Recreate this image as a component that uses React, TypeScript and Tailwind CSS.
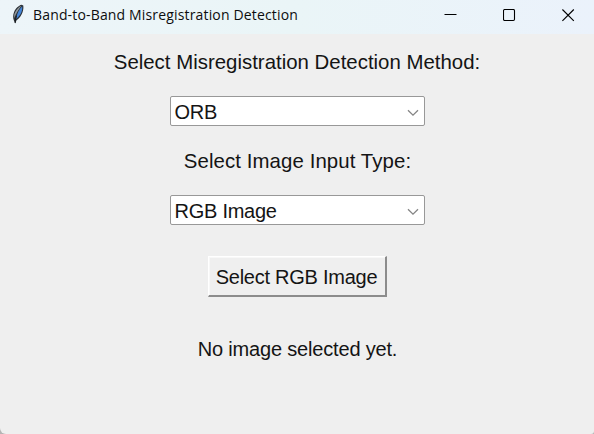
import React from "react";

function FeatherIcon() {
  return (
    <svg className="ml-[11px] shrink-0" width="14" height="22" viewBox="0 0 14 22">
      <path d="M10.5 .8 C7.8 1.4 4.5 4.5 3 8.2 C1.9 11 1.9 14 2.8 16.2 L4.1 19.6 L5.6 16.2 C9 14 13.2 8 12.3 1.4 Z" fill="#2b3036" />
      <path d="M10.4 1.8 C7.6 2.8 4.5 6.5 3.2 10.8 L3.2 14.2 C5 9.5 7.8 5.2 10.4 1.8 Z" fill="#92999d" />
      <path d="M11.2 2.2 C8.2 5.4 5.8 9.6 4.9 14.9 C8.6 12.4 11.9 7.9 11.2 2.2 Z" fill="#4384d6" />
      <path d="M5.6 11.5 C4.8 14 4.3 16.5 4.2 19" fill="none" stroke="#15181c" strokeWidth="0.9" />
    </svg>
  );
}

function TitleBar() {
  return (
    <header className="flex h-[34px] items-start bg-linear-to-r from-[#edf5f9] via-[#eaf5f7] to-[#ebf2fb]">
      <div className="flex h-[30px] flex-1 items-center">
        <FeatherIcon />
        <span className="ml-2 whitespace-pre font-['Open_Sans','Noto_Sans',sans-serif] text-[14px] leading-[30px] tracking-[0.16px] text-[#0c0d0e]">
          Band-to-Band Misregistration Detection
        </span>
      </div>
      <div className="flex h-[30px] items-center gap-[46px] pr-[19px] text-black">
        <svg width="13" height="13" viewBox="0 0 13 13">
          <path d="M.5 5.5h12" stroke="currentColor" />
        </svg>
        <svg width="13" height="13" viewBox="0 0 13 13">
          <rect x=".5" y=".5" width="11" height="11" rx="1.2" fill="none" stroke="currentColor" strokeWidth="1.1" />
        </svg>
        <svg width="13" height="13" viewBox="0 0 13 13">
          <path d="M.4.5l11.4 11.4M11.8.5L.4 11.9" stroke="currentColor" strokeWidth="1.15" />
        </svg>
      </div>
    </header>
  );
}

function Combobox({ value }: { value: string }) {
  return (
    <div className="flex h-[30px] w-[255px] items-center justify-between rounded-[2px] border border-[#989898] bg-white pr-[5px] pl-[4px]">
      <span className="pt-[2px] whitespace-pre tracking-[-0.25px]">{value}</span>
      <svg width="12" height="8" viewBox="0 0 12 8" className="mt-[3px]">
        <path d="M1 1.2l5 4.9 5-4.9" fill="none" stroke="#858585" strokeWidth="1.3" />
      </svg>
    </div>
  );
}

export default function App() {
  return (
    <div className="bg-[#b4b4b4]">
      <div className="flex h-[434px] w-[594px] flex-col overflow-hidden rounded-br-[3px] rounded-bl-[6px] bg-[#efefef]">
        <TitleBar />
        <main className="flex flex-1 flex-col items-center font-['Liberation_Sans',Arial,sans-serif] text-[20px] leading-[24px] text-[#141414]">
          <p className="mt-4 whitespace-pre text-[20.4px] tracking-[0.01px]">Select Misregistration Detection Method:</p>
          <div className="mt-[22px]">
            <Combobox value="ORB" />
          </div>
          <p className="mt-[23px] ml-px whitespace-pre text-[20.4px] tracking-[0.09px]">Select Image Input Type:</p>
          <div className="mt-[22px]">
            <Combobox value="RGB Image" />
          </div>
          <button className="mt-[31px] flex h-[41px] w-[179px] items-center justify-center border-t border-r-2 border-b-2 border-l border-t-white border-r-[#8c8c8c] border-b-[#8c8c8c] border-l-white whitespace-pre tracking-[-0.25px] shadow-[inset_1px_1px_0_#f8f8f8]">
            <span className="pt-[2px]">Select RGB Image</span>
          </button>
          <p className="mt-[40px] ml-px whitespace-pre tracking-[-0.18px]">No image selected yet.</p>
        </main>
      </div>
    </div>
  );
}
